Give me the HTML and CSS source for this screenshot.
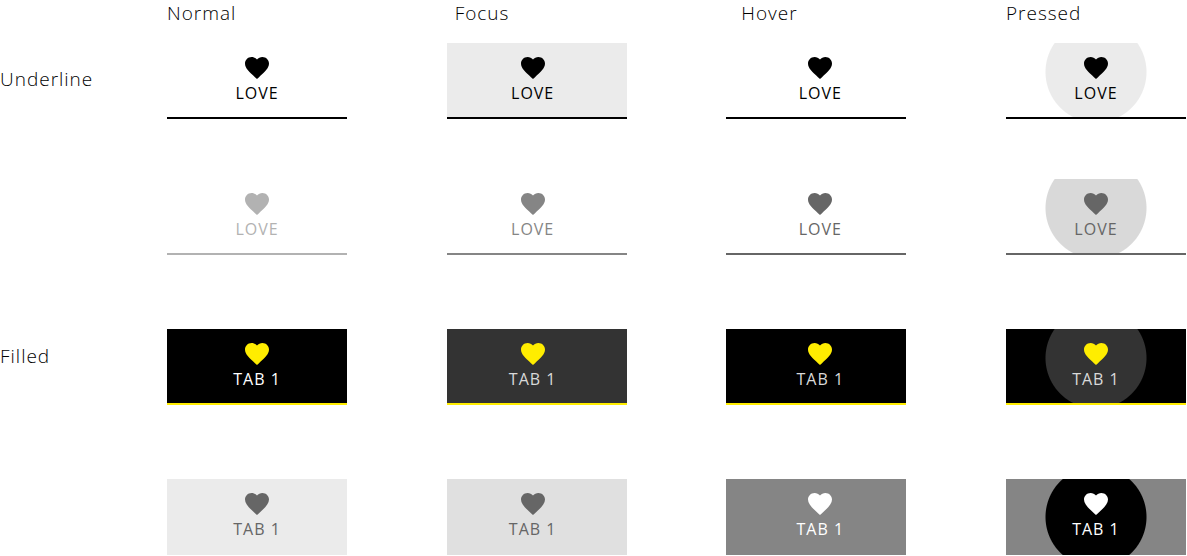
FILE: index.html
```html
<!DOCTYPE html>
<html lang="en">
<head>
<meta charset="utf-8">
<title>Tab states</title>
<link rel="stylesheet" href="styles.css">
</head>
<body>
<svg class="defs" aria-hidden="true"><symbol id="heart" viewBox="2 3 20 18.35" preserveAspectRatio="none"><path d="M12 21.35l-1.45-1.32C5.4 15.36 2 12.28 2 8.5 2 5.42 4.42 3 7.5 3c1.74 0 3.41.81 4.5 2.09C13.09 3.81 14.76 3 16.5 3 19.58 3 22 5.42 22 8.5c0 3.78-3.4 6.86-8.55 11.54L12 21.35z"/></symbol></svg>
<main class="sheet">
  <header class="row heads">
    <span></span>
    <div class="cells">
      <h2 class="head">Normal</h2>
      <h2 class="head head-focus">Focus</h2>
      <h2 class="head head-hover">Hover</h2>
      <h2 class="head">Pressed</h2>
    </div>
  </header>
  <section class="row group-underline">
    <h2 class="label">Underline</h2>
    <div class="cells">
      <button class="tab underline"><svg class="icon"><use href="#heart"/></svg>LOVE</button>
      <button class="tab underline focus tint"><svg class="icon"><use href="#heart"/></svg>LOVE</button>
      <button class="tab underline hover"><svg class="icon"><use href="#heart"/></svg>LOVE</button>
      <button class="tab underline pressed"><svg class="icon"><use href="#heart"/></svg>LOVE</button>
      <button class="tab underline soft"><svg class="icon"><use href="#heart"/></svg>LOVE</button>
      <button class="tab underline focus medium"><svg class="icon"><use href="#heart"/></svg>LOVE</button>
      <button class="tab underline hover dark"><svg class="icon"><use href="#heart"/></svg>LOVE</button>
      <button class="tab underline pressed dark"><svg class="icon"><use href="#heart"/></svg>LOVE</button>
    </div>
  </section>
  <section class="row group-filled">
    <h2 class="label">Filled</h2>
    <div class="cells">
      <button class="tab filled active"><svg class="icon"><use href="#heart"/></svg>TAB 1</button>
      <button class="tab filled focus"><svg class="icon"><use href="#heart"/></svg>TAB 1</button>
      <button class="tab filled hover"><svg class="icon"><use href="#heart"/></svg>TAB 1</button>
      <button class="tab filled pressed"><svg class="icon"><use href="#heart"/></svg>TAB 1</button>
      <button class="tab idle"><svg class="icon"><use href="#heart"/></svg>TAB 1</button>
      <button class="tab idle focus"><svg class="icon"><use href="#heart"/></svg>TAB 1</button>
      <button class="tab idle hover"><svg class="icon"><use href="#heart"/></svg>TAB 1</button>
      <button class="tab idle pressed"><svg class="icon"><use href="#heart"/></svg>TAB 1</button>
    </div>
  </section>
</main>
</body>
</html>
```
FILE: styles.css
```css
* { box-sizing: border-box; }
body {
  margin: 0;
  background: #fff;
  color: #000;
  font-family: "Open Sans", sans-serif;
}
.defs { display: none; }
.sheet { padding-right: 1px; }
.row {
  display: grid;
  grid-template-columns: 167px 1fr;
}
.heads { padding-bottom: 17px; }
.cells {
  display: grid;
  grid-template-columns: repeat(4, 180px);
  justify-content: space-between;
}
.head, .label {
  margin: 0;
  font-size: 19px;
  font-weight: 300;
  line-height: 26px;
  letter-spacing: 1px;
}
.head-focus { padding-left: 8px; }
.head-hover { padding-left: 15px; }
.group-underline { padding-bottom: 74px; }
.group-underline .cells { row-gap: 60px; }
.group-underline .label { padding-top: 23px; }
.group-filled .cells { row-gap: 74px; }
.group-filled .label { padding-top: 14px; }

.tab {
  display: flex;
  flex-direction: column;
  align-items: center;
  gap: 2px;
  height: 76px;
  padding: 14px 0 0;
  border: 0;
  background: transparent;
  color: #000;
  font-family: inherit;
  font-size: 16px;
  line-height: 24px;
  letter-spacing: 1px;
}
.icon {
  width: 24px;
  height: 22px;
  fill: currentColor;
}
.focus { padding-right: 8px; }
.hover { padding-left: 8px; }
.underline { border-bottom: 2px solid currentColor; }
.tint { background: #ebebeb; }
.soft { color: #b2b2b2; }
.medium { color: #858585; }
.dark { color: #666; }
.pressed { background: radial-gradient(circle at 90px 29px, #ebebeb 50px, transparent 51px); }
.pressed.dark { background: radial-gradient(circle at 90px 29px, #d9d9d9 50px, transparent 51px); }

.filled {
  border-bottom: 2px solid #ffed00;
  background: #000;
  color: #d9d9d9;
}
.filled .icon { fill: #ffed00; }
.filled.active { color: #fff; }
.filled.focus { background: #333; }
.filled.pressed { background: radial-gradient(circle at 90px 29px, #333 50px, #000 51px); }

.idle { background: #ebebeb; color: #666; }
.idle.focus { background: #e0e0e0; }
.idle.hover { background: #858585; color: #fff; }
.idle.pressed {
  background: radial-gradient(circle at 90px 38px, #000 50px, #858585 51px);
  color: #fff;
}
```
